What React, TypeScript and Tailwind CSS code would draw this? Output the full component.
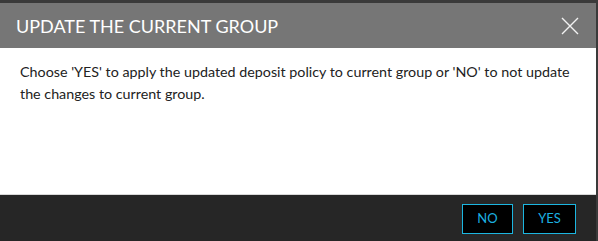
import React from "react";

export default function App() {
  return (
    <div className="w-[598px] h-[241px] bg-[#3a3a3a] flex flex-col overflow-hidden" style={{ fontFamily: "Lato, 'Open Sans', sans-serif" }}>
      <div className="mt-[3px] mr-[2px] flex flex-col flex-1 bg-white">
        <div className="h-[45px] bg-[#767676] flex items-center justify-between pl-[16px] pr-[17px]">
          <span className="text-white text-[18px] pt-[1px]">UPDATE THE CURRENT GROUP</span>
          <svg width="18" height="18" viewBox="0 0 18 18" className="text-[#f2f2f2]">
            <path d="M1 1 L17 17 M17 1 L1 17" stroke="currentColor" strokeWidth="1.4" />
          </svg>
        </div>
        <div className="flex-1 border-b border-[#d9d9d9] pl-[20px] pr-[16px] pt-[13px]">
          <p className="text-[14.3px] leading-[22px] text-[#222]">
            Choose 'YES' to apply the updated deposit policy to current group or 'NO' to not update the changes to current group.
          </p>
        </div>
        <div className="h-[46px] bg-[#262626] flex items-center justify-end gap-[10px] pr-[20px] pt-[1px]">
          <button className="w-[51px] h-[30px] bg-black border border-[#1cb6e0] text-[#1cb0e0] text-[13px]">NO</button>
          <button className="w-[53px] h-[30px] bg-black border border-[#1cb6e0] text-[#1cb0e0] text-[13px]">YES</button>
        </div>
      </div>
    </div>
  );
}
